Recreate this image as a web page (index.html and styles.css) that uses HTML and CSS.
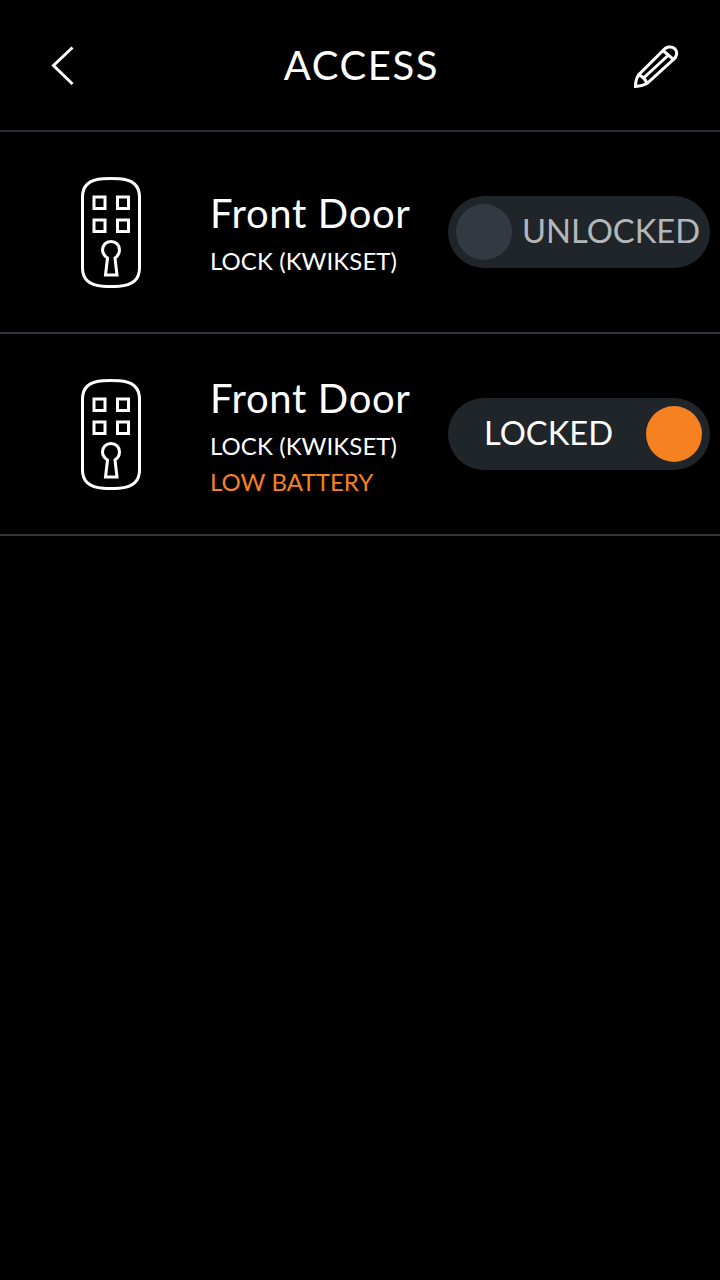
FILE: index.html
```html
<!DOCTYPE html>
<html lang="en">
<head>
<meta charset="utf-8">
<title>Access</title>
<link rel="stylesheet" href="styles.css">
</head>
<body>
<header class="topbar">
  <svg class="back" width="24" height="40" viewBox="0 0 24 40"><path d="M21.500 1.500 L2.500 19.500 L21.500 38" /></svg>
  <h1 class="title">ACCESS</h1>
  <svg class="edit" width="50" height="50" viewBox="0 0 50 50">
    <path d="M5.500 44.500 C5.500 40 6.500 36 8.500 33 L33 8.500 C36 5 41 3.500 44.500 6.500 C48 10 47 14.500 43.500 17.500 L17 41.500 C13.500 43.500 9.500 44.500 5.500 44.500 Z"/>
    <path d="M33 8.500 L43.500 17.500 M8.500 33 C12 34 15.500 37.500 17 41.500 M12.500 37 L38.500 13" />
  </svg>
</header>
<ul class="list">
  <li class="row">
    <svg class="lock" width="60" height="111" viewBox="0 0 60 111">
      <path d="M1.500 20 C1.500 7 10 2.500 22 1.800 Q30 1.300 38 1.800 C50 2.500 58.500 7 58.500 20 L58.500 91 C58.500 104 50 108.500 38 109.200 Q30 109.700 22 109.200 C10 108.500 1.500 104 1.500 91 Z" />
      <rect x="13" y="20" width="11" height="11.500" /><rect x="36.500" y="20" width="11" height="11.500" />
      <rect x="13" y="43" width="11" height="11.500" /><rect x="36.500" y="43" width="11" height="11.500" />
      <path d="M26.500 81 L24.500 98 L36 98 L34 81 C37 79 38.500 76.500 38.500 73 C38.500 68 35 64.500 30 64.500 C25 64.500 21.500 68 21.500 73 C21.500 76.500 23.500 79 26.500 81 Z" />
    </svg>
    <div class="info">
      <div class="name">Front Door</div>
      <div class="kind">LOCK (KWIKSET)</div>
    </div>
    <div class="toggle toggle-off">
      <span class="knob knob-off"></span>
      <span class="state state-off">UNLOCKED</span>
    </div>
  </li>
  <li class="row">
    <svg class="lock" width="60" height="111" viewBox="0 0 60 111">
      <path d="M1.500 20 C1.500 7 10 2.500 22 1.800 Q30 1.300 38 1.800 C50 2.500 58.500 7 58.500 20 L58.500 91 C58.500 104 50 108.500 38 109.200 Q30 109.700 22 109.200 C10 108.500 1.500 104 1.500 91 Z" />
      <rect x="13" y="20" width="11" height="11.500" /><rect x="36.500" y="20" width="11" height="11.500" />
      <rect x="13" y="43" width="11" height="11.500" /><rect x="36.500" y="43" width="11" height="11.500" />
      <path d="M26.500 81 L24.500 98 L36 98 L34 81 C37 79 38.500 76.500 38.500 73 C38.500 68 35 64.500 30 64.500 C25 64.500 21.500 68 21.500 73 C21.500 76.500 23.500 79 26.500 81 Z" />
    </svg>
    <div class="info">
      <div class="name">Front Door</div>
      <div class="kind">LOCK (KWIKSET)</div>
      <div class="kind warn">LOW BATTERY</div>
    </div>
    <div class="toggle toggle-on">
      <span class="state">LOCKED</span>
      <span class="knob knob-on"></span>
    </div>
  </li>
</ul>
</body>
</html>
```
FILE: styles.css
```css
* { box-sizing: border-box; }
html, body { margin: 0; padding: 0; background: #000; }
body { width: 720px; height: 1280px; color: #fff; font-family: Lato, "Open Sans", sans-serif; }
svg { fill: none; stroke: #fff; display: block; }
.topbar { height: 132px; border-bottom: 2px solid #2a2e33; display: flex; align-items: center; justify-content: space-between; padding: 0 40px 0 51px; }
.back { stroke-width: 3; margin-top: 2px; }
.edit { stroke-width: 3; margin-top: 4px; }
.title { margin: 0 0 0 18px; font-size: 40px; font-weight: 400; letter-spacing: 1.6px; line-height: 48px; }
.list { list-style: none; margin: 0; padding: 0; }
.row { height: 202px; border-bottom: 2px solid #32353f; display: flex; align-items: center; padding: 0 10px 0 81px; }
.lock { stroke-width: 3; flex: none; }
.info { margin-left: 69px; width: 237px; align-self: flex-start; padding-top: 57px; }
.row + .row .info { padding-top: 40px; }
.name { font-size: 40px; line-height: 48px; letter-spacing: 0.65px; }
.kind { font-size: 24px; line-height: 36px; letter-spacing: 0.07px; }
.name + .kind { margin-top: 6px; }
.warn { color: #f68121; }
.toggle { width: 262px; height: 72px; margin-left: auto; border-radius: 36px; background: #20252a; display: flex; align-items: center; padding: 0 8px; flex: none; }
.toggle-on { justify-content: space-between; padding-left: 36px; }
.knob { width: 56px; height: 56px; border-radius: 50%; flex: none; }
.knob-off { background: #333940; }
.knob-on { background: #f68121; }
.state { font-size: 32.7px; line-height: 40px; margin-top: -2px; }
.toggle-on .state { margin-right: 33px; }
.state-off { color: #b4b7ba; margin-left: 10px; }
```
